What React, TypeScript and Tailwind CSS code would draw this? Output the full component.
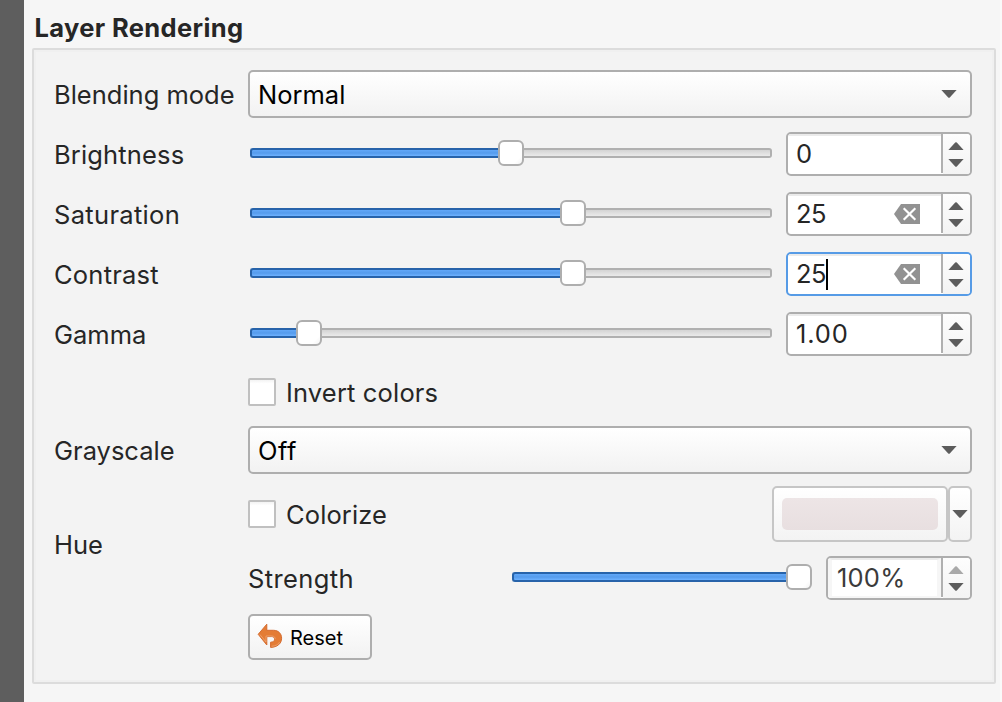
import type { ReactNode } from "react";

function Triangle({ up = false, muted = false }: { up?: boolean; muted?: boolean }) {
  return (
    <svg width="16" height="8" viewBox="0 0 16 8" className={muted ? "block fill-[#a9a9a9]" : "block fill-[#5c5c5c]"}>
      <path d={up ? "M0.4 8 7.2 0.5Q8 0 8.8 0.5L15.6 8Z" : "M0.4 0H15.6L8.8 7.5Q8 8 7.2 7.5Z"} />
    </svg>
  );
}

function Combo({ value, className = "" }: { value: string; className?: string }) {
  return (
    <div className="flex h-12 items-center justify-between rounded-[5px] border-2 border-[#aeaeae] bg-linear-to-b from-white to-[#f2f2f2] pr-[13px] pl-2 text-black">
      <span className={`${className} pt-[2px]`}>{value}</span>
      <Triangle />
    </div>
  );
}

function Slider({ fill, children }: { fill: number; children?: ReactNode }) {
  return (
    <div className="flex h-[26px] min-w-0 flex-1 items-center">
      <div
        className="h-[10px] shrink-0 rounded-l-[3px] border-y-2 border-l-2 border-[#2763aa] bg-linear-to-b from-[#62a8f8] via-[#559bec] to-[#6eb2ff]"
        style={{ width: fill }}
      />
      <div className="h-[26px] w-[26px] shrink-0 rounded-[6px] border-2 border-[#aeaeae] bg-linear-to-br from-white from-80% to-[#f3f3f3]" />
      {children}
    </div>
  );
}

function Groove() {
  return <div className="h-[10px] flex-1 rounded-r-[3px] border-y-2 border-r-2 border-[#b0b0b0] bg-linear-to-b from-[#d4d4d4] to-[#eaeaea]" />;
}

function ClearIcon() {
  return (
    <svg width="26" height="20" viewBox="0 0 26 20" className="mr-[21px] mb-[2px] block">
      <path d="M7 0H26V20H7L0 10Z" fill="#929292" />
      <path d="M9.7 4.2 21.3 15.8M21.3 4.2 9.7 15.8" stroke="#fff" strokeWidth="2.2" />
    </svg>
  );
}

type SpinProps = {
  value: string;
  width?: string;
  className?: string;
  clearable?: boolean;
  focused?: boolean;
  atMax?: boolean;
};

function Spin({ value, width = "w-[186px]", className = "", clearable, focused, atMax }: SpinProps) {
  return (
    <div
      className={`${width} ${focused ? "border-[#569be6]" : "border-[#aeaeae]"} ${atMax ? "text-[#3b3b3b]" : "text-[#262626]"} flex h-11 shrink-0 overflow-hidden rounded-[5px] border-2 bg-white`}
    >
      <div
        className={`${atMax ? "border-x-4 border-b-2 border-x-[#f6f6f6] border-b-[#f6f6f6] pl-[5px]" : "pl-2"} flex flex-1 items-center border-t-2 border-t-[#ebebeb]`}
      >
        <span className={`${className} ${atMax ? "" : "pb-[2px]"}`}>{value}</span>
        {focused && <span className="mb-[2px] h-[31px] w-[2px] shrink-0 bg-black" />}
        <span className="flex-1" />
        {clearable && <ClearIcon />}
      </div>
      <div className="h-[39px] w-[2px] bg-[#b0b0b0]" />
      <div className="flex w-[27px] flex-col items-center gap-[9px] bg-linear-to-b from-[#fdfdfd] to-[#f3f3f3] pt-2 pr-[1px]">
        <Triangle up muted={atMax} />
        <Triangle />
      </div>
    </div>
  );
}

function Row({ label, children, className = "" }: { label?: ReactNode; children: ReactNode; className?: string }) {
  return (
    <div className={`${className} flex`}>
      <div className="flex w-[194px] shrink-0 items-center pt-[2px] whitespace-nowrap">{label}</div>
      <div className="min-w-0 flex-1">{children}</div>
    </div>
  );
}

function SliderRow({ label, fill, children }: { label: ReactNode; fill: number; children: ReactNode }) {
  return (
    <Row label={label} className="mb-4 h-11">
      <div className="flex gap-[14px] pl-[2px]">
        <div className="flex min-w-0 flex-1 pt-2">
          <Slider fill={fill}>
            <Groove />
          </Slider>
        </div>
        {children}
      </div>
    </Row>
  );
}

function Check() {
  return <div className="h-7 w-7 shrink-0 rounded-[2px] border-2 border-[#c0c0c0] bg-linear-to-b from-[#f3f3f3] to-white to-15%" />;
}

function UndoIcon() {
  return (
    <svg width="26" height="26" viewBox="0 0 26 26" className="mb-[2px] block">
      <path
        d="M1.2 11.3 9.8 1.2V7.3H16.5C21.5 7.3 24.6 10.7 24.6 15.2 24.6 20.6 20.3 24.2 13.6 24.4V19.2C16.1 19.2 17.6 17.9 17.6 16.2 17.6 14.5 16.3 13.6 14.7 13.6H9.8V22Z"
        fill="#e47c35"
        stroke="#d56c30"
        strokeWidth="1"
        strokeLinejoin="round"
      />
      <path d="M2.9 11.5 9 19V13H14.9C17 13 18.2 14.2 18.2 16.2M14.5 23.3C18.5 23.1 21.3 21.5 22.6 19" fill="none" stroke="#efa673" strokeWidth="0.8" />
    </svg>
  );
}

export default function App() {
  return (
    <div className="flex h-[702px] w-[1002px] overflow-hidden border-r-2 border-[#fafafa] bg-[#f6f6f6] font-['Inter','Liberation_Sans',sans-serif] text-[25.5px] leading-8 text-[#262626]">
      <div className="w-6 shrink-0 bg-[#5e5e5e]" />
      <div className="flex flex-1 flex-col pr-1 pl-2">
        <h1 className="mt-3 ml-[2.5px] h-9 text-[25.5px] font-bold tracking-[0.36px] whitespace-nowrap">Layer Rendering</h1>
        <div className="h-[636px] rounded-[2px] border-2 border-[#dcdcdc] bg-[#f3f3f3] pt-5 pr-[22px] pl-5 shadow-[inset_0_0_0_2px_#f0f0f0]">
          <Row label={<span>Blending mode</span>} className="mb-[14px] h-12">
            <Combo value="Normal" />
          </Row>
          <SliderRow label={<span className="tracking-[0.15px]">Brightness</span>} fill={248}>
            <Spin value="0" />
          </SliderRow>
          <SliderRow label={<span className="tracking-[0.32px]">Saturation</span>} fill={310}>
            <Spin value="25" clearable className="tracking-[-0.6px]" />
          </SliderRow>
          <SliderRow label={<span className="tracking-[0.22px]">Contrast</span>} fill={310}>
            <Spin value="25" clearable focused className="tracking-[-0.6px]" />
          </SliderRow>
          <SliderRow label={<span>Gamma</span>} fill={46}>
            <Spin value="1.00" className="tracking-[0.9px]" />
          </SliderRow>
          <Row className="mt-[22px] mb-5 h-7">
            <div className="flex h-7 items-center gap-[10px]">
              <Check />
              <span className="pt-[2px] tracking-[0.16px]">Invert colors</span>
            </div>
          </Row>
          <Row label={<span>Grayscale</span>} className="mb-3 h-12">
            <Combo value="Off" className="tracking-[0.5px]" />
          </Row>
          <Row label={<span className="pt-[2px]">Hue</span>} className="h-[114px]">
            <div className="flex h-14 items-center gap-[10px]">
              <Check />
              <span className="pt-[2px] tracking-[0.12px]">Colorize</span>
              <div className="ml-auto flex h-14">
                <div className="w-44 rounded-[5px] border-2 border-[#c6c6c6] bg-linear-to-b from-white to-[#f3f3f3] px-2 py-[10px]">
                  <div className="h-8 rounded-[5px] bg-linear-to-b from-[#ede5e6] to-[#e8dfe0]" />
                </div>
                <div className="flex w-6 items-center justify-center rounded-[5px] border-2 border-[#c6c6c6] bg-linear-to-b from-white to-[#f3f3f3]">
                  <Triangle />
                </div>
              </div>
            </div>
            <div className="mt-[14px] flex h-11">
              <span className="flex w-[264px] items-center pt-[2px] tracking-[0.4px]">Strength</span>
              <div className="flex flex-1 pt-2">
                <Slider fill={274} />
              </div>
              <Spin value="100%" width="w-[146px]" atMax className="tracking-[0.2px]" />
            </div>
          </Row>
          <Row className="mt-[14px] h-[46px]">
            <button className="flex h-[46px] w-[124px] items-center gap-[7px] rounded-[5px] border-2 border-[#aeaeae] bg-linear-to-b from-white to-[#f2f2f2] pl-[7px] text-[20px] text-black">
              <UndoIcon />
              <span className="pt-[2px]">Reset</span>
            </button>
          </Row>
        </div>
      </div>
    </div>
  );
}
